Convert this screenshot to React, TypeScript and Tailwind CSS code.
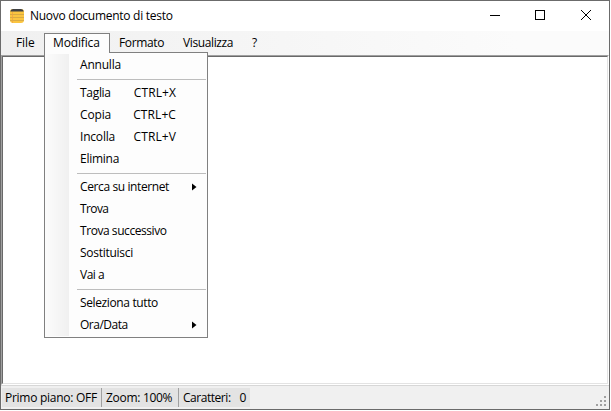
import React from 'react';

type Item = { label?: string; tracking?: string; shortcut?: string; arrow?: boolean };

const items: Item[] = [
  { label: 'Annulla', tracking: 'tracking-[-0.2px]' },
  {},
  { label: 'Taglia', tracking: 'tracking-[-0.3px]', shortcut: 'CTRL+X' },
  { label: 'Copia', tracking: 'tracking-[-0.15px]', shortcut: 'CTRL+C' },
  { label: 'Incolla', tracking: 'tracking-[-0.2px]', shortcut: 'CTRL+V' },
  { label: 'Elimina', tracking: 'tracking-[-0.25px]' },
  {},
  { label: 'Cerca su internet', tracking: 'tracking-[-0.39px]', arrow: true },
  { label: 'Trova', tracking: 'tracking-[-0.6px]' },
  { label: 'Trova successivo', tracking: 'tracking-[-0.44px]' },
  { label: 'Sostituisci', tracking: 'tracking-[-0.28px]' },
  { label: 'Vai a', tracking: 'tracking-[-0.5px]' },
  {},
  { label: 'Seleziona tutto', tracking: 'tracking-[-0.37px]' },
  { label: 'Ora/Data', tracking: 'tracking-[-0.5px]', arrow: true },
];

function TitleBar() {
  return (
    <header className="flex h-[30px] shrink-0 items-center bg-white pl-[9px]">
      <svg width="14" height="14" viewBox="0 0 14 14" className="mr-[6px] shrink-0">
        <rect width="14" height="14" rx="3" fill="#fbc540" />
        <path d="M0.3 2.5Q0.5 0 3 0H11Q13.5 0 13.7 2.5Z" fill="#3f4144" />
        <path d="M0 5.5H14M0 8.5H14M0 11.5H14" stroke="#d5a845" strokeWidth="0.9" />
        <path d="M2.5 3V14" stroke="#f0a044" strokeWidth="0.7" />
      </svg>
      <span className="grow tracking-[-0.27px] whitespace-pre">Nuovo documento di testo</span>
      <svg width="135" height="30" viewBox="0 0 135 30" fill="none" stroke="#000" shapeRendering="crispEdges">
        <path d="M16 14.5H26" />
        <rect x="61.5" y="9.5" width="9" height="9" />
        <path d="M107 9L117 19M117 9L107 19" shapeRendering="auto" />
      </svg>
    </header>
  );
}

function Dropdown() {
  return (
    <div className="absolute top-[18px] -left-px z-10 w-[164px] border border-[#808080] bg-[#fdfdfd] pt-px pb-px tracking-normal">
      <div className="bg-[linear-gradient(90deg,#fcfcfc,#f0f0f0)] bg-[length:24px_100%] bg-no-repeat">
        {items.map((it, i) =>
          it.label ? (
            <div key={i} className="flex h-[22px] items-center pl-[35px] leading-4">
              <span className={it.tracking}>{it.label}</span>
              {it.shortcut && <span className="mr-[31px] ml-auto tracking-[0.1px]">{it.shortcut}</span>}
              {it.arrow && (
                <svg width="5" height="8" viewBox="0 0 5 8" className="mr-[10px] ml-auto">
                  <path d="M0 0.5L4.5 4L0 7.5Z" fill="#000" />
                </svg>
              )}
            </div>
          ) : (
            <div key={i} className="h-[6px] pt-[3px] pr-px pl-[32px]">
              <div className="h-px bg-[#bdbdbd]" />
            </div>
          ),
        )}
      </div>
    </div>
  );
}

function MenuBar() {
  return (
    <nav className="flex h-[24px] shrink-0 items-start bg-[linear-gradient(90deg,#f0f0f0,#fbfbfb_85%)] pt-[2px] pl-[5px]">
      <span className="w-[38px] pt-px pl-[10px] leading-[18px]">File</span>
      <div className="relative h-[20px] w-[66px] border border-b-0 border-[#808080] bg-[#fdfdfd]">
        <span className="relative z-20 block h-[19px] w-[64px] bg-[#fdfdfd] pl-[8px] leading-[18px] tracking-[-0.15px]">Modifica</span>
        <Dropdown />
      </div>
      <span className="w-[64px] pt-px pl-[9px] leading-[18px] tracking-[-0.35px]">Formato</span>
      <span className="w-[69px] pt-px pl-[9px] leading-[18px] tracking-[-0.38px]">Visualizza</span>
      <span className="pt-px pl-[9px] leading-[18px]">?</span>
    </nav>
  );
}

function StatusBar() {
  return (
    <footer className="flex h-[24px] shrink-0 items-start border-t border-[#d7d7d7] bg-[#f0f0f0] pt-[2px] pl-px">
      <span className="h-[19px] w-[99px] bg-[#e3e3e3] pl-[3px] leading-[20px] tracking-[-0.27px] whitespace-pre">Primo piano: OFF</span>
      <span className="h-[19px] w-[77px] border-l border-[#a0a0a0] bg-[#e3e3e3] pl-[4px] leading-[20px] tracking-[-0.3px] whitespace-pre">Zoom: 100%</span>
      <span className="flex h-[19px] w-[72px] justify-between border-l border-[#a0a0a0] bg-[#e3e3e3] pr-[4px] pl-[4px] leading-[20px] tracking-[-0.46px]">
        <span>Caratteri:</span>
        <span>0</span>
      </span>
      <svg width="10" height="10" viewBox="0 0 10 10" className="mt-[8px] mr-[3px] ml-auto" fill="#a0a0a0" shapeRendering="crispEdges">
        <path d="M8 0h2v2h-2zM4 4h2v2h-2zM8 4h2v2h-2zM0 8h2v2h-2zM4 8h2v2h-2zM8 8h2v2h-2z" />
      </svg>
    </footer>
  );
}

export default function App() {
  return (
    <div className="h-[411px] w-[611px] overflow-hidden bg-white">
      <div className="flex h-[410px] w-[610px] flex-col border border-[#6b6b6b] font-['Open_Sans','Noto_Sans',sans-serif] text-[12px] leading-4 tracking-[-0.1px] text-black">
        <TitleBar />
        <MenuBar />
        <main className="grow border border-t-[#a0a0a0] border-r-white border-b-white border-l-[#a0a0a0]">
          <div className="h-full border border-t-[#696969] border-r-[#e3e3e3] border-b-[#e3e3e3] border-l-[#696969] bg-white" />
        </main>
        <StatusBar />
      </div>
    </div>
  );
}
